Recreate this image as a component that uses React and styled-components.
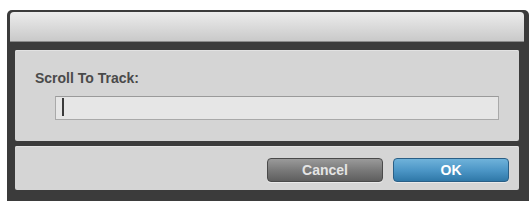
import React from "react";
import styled, { createGlobalStyle } from "styled-components";

const Global = createGlobalStyle`
  body {
    margin: 0;
    background: #ffffff;
    font-family: "Liberation Sans", Arial, sans-serif;
  }
`;

const Window = styled.div`
  margin: 10px 0 0 7px;
  width: 522px;
  height: 191px;
  box-sizing: border-box;
  padding: 2px 5px 0 3px;
  background: #3b3b3b;
  border-radius: 5px 5px 0 0;
  display: flex;
  flex-direction: column;
`;

const TitleBar = styled.div`
  height: 30px;
  border-radius: 4px 4px 0 0;
  background: linear-gradient(#ececec, #d9d9d9 55%, #c9c9c9);
  border-bottom: 1px solid #8a8a8a;
  box-sizing: border-box;
`;

const Panel = styled.div`
  margin: ${p => p.$top}px 5px 0 5px;
  height: ${p => p.$height}px;
  background: #d5d5d5;
  border-radius: 2px;
  box-sizing: border-box;
  box-shadow: inset 0 1px 0 #e2e2e2;
`;

const Form = styled(Panel)`
  padding: 21px 20px 0 20px;
  display: flex;
  flex-direction: column;
`;

const Label = styled.label`
  font-size: 14px;
  line-height: 14px;
  font-weight: bold;
  color: #4a4a4a;
`;

const FieldWrap = styled.div`
  position: relative;
  margin: 11px 0 0 20px;
  width: 444px;
  height: 24px;
`;

const Field = styled.input`
  display: block;
  width: 100%;
  height: 100%;
  box-sizing: border-box;
  border: 1px solid #a9a9a9;
  border-top-color: #9a9a9a;
  background: #e6e6e6;
  padding: 0 6px;
  font-size: 14px;
  font-family: "Liberation Sans", Arial, sans-serif;
  outline: none;
`;

const Caret = styled.span`
  position: absolute;
  left: 7px;
  top: 2px;
  width: 2px;
  height: 18px;
  background: #3a3a3a;
`;

const Actions = styled(Panel)`
  display: flex;
  justify-content: flex-end;
  gap: 10px;
  padding: 12px 10px 0 0;
`;

const Button = styled.button`
  width: 116px;
  height: 24px;
  border-radius: 4px;
  font-family: "Liberation Sans", Arial, sans-serif;
  font-size: 14px;
  font-weight: bold;
  color: ${p => (p.$primary ? "#ffffff" : "#e4e4e4")};
  border: 1px solid ${p => (p.$primary ? "#2a5f86" : "#4a4a4a")};
  background: ${p =>
    p.$primary
      ? "linear-gradient(#6fb2da, #4d97c7 50%, #2f78a8)"
      : "linear-gradient(#9a9a9a, #7a7a7a 50%, #5e5e5e)"};
  box-shadow: 0 1px 0 #eaeaea;
  padding: 0;
`;

export default function App() {
  return (
    <>
      <Global />
      <Window>
        <TitleBar />
        <Form $top={8} $height={91}>
          <Label>Scroll To Track:</Label>
          <FieldWrap>
            <Field defaultValue="" />
            <Caret />
          </FieldWrap>
        </Form>
        <Actions $top={5} $height={44}>
          <Button>Cancel</Button>
          <Button $primary>OK</Button>
        </Actions>
      </Window>
    </>
  );
}
